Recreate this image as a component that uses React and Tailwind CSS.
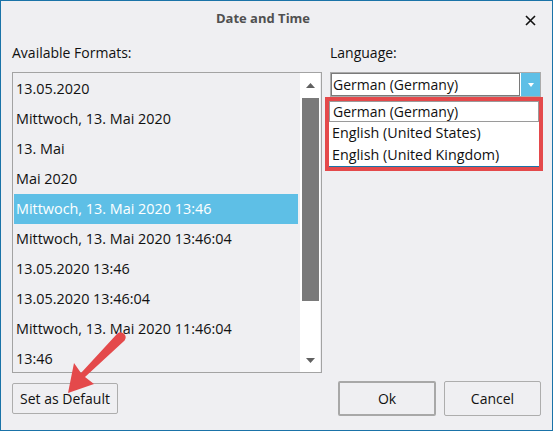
import React from "react";

const formats = [
  "13.05.2020",
  "Mittwoch, 13. Mai 2020",
  "13. Mai",
  "Mai 2020",
  "Mittwoch, 13. Mai 2020 13:46",
  "Mittwoch, 13. Mai 2020 13:46:04",
  "13.05.2020 13:46",
  "13.05.2020 13:46:04",
  "Mittwoch, 13. Mai 2020 11:46:04",
  "13:46",
];

const languages = ["German (Germany)", "English (United States)", "English (United Kingdom)"];

function Triangle({ up, className }) {
  return (
    <svg width="9" height="5" viewBox="0 0 9 5" className={className}>
      <polygon points={up ? "0,5 9,5 4.5,0" : "0,0 9,0 4.5,5"} fill="currentColor" />
    </svg>
  );
}

function FormatList() {
  return (
    <div className="h-[301px] border border-[#a3a3a3] flex overflow-hidden">
      <div className="flex-1 pl-[1px] pr-[2px] py-[1px] overflow-hidden text-[14.4px]">
        {formats.map((f, i) => (
          <div
            key={i}
            className={`h-[30px] flex items-center pl-[2px] whitespace-nowrap ${
              i === 4 ? "bg-[#5ebfe6] text-white" : "text-[#111]"
            }`}
          >
            {f}
          </div>
        ))}
      </div>
      <div className="w-[20px] mr-[1px] bg-white flex flex-col items-center">
        <div className="h-[25px] flex items-center justify-center text-[#606060]">
          <Triangle up />
        </div>
        <div className="w-[17px] h-[203px] bg-[#7a7a7a]" />
        <div className="flex-1" />
        <div className="h-[24px] flex items-center justify-center text-[#606060]">
          <Triangle />
        </div>
      </div>
    </div>
  );
}

function LanguageCombo() {
  return (
    <div className="relative mt-[1px]">
      <div className="h-[25px] border border-[#ababab] bg-white flex">
        <div className="flex-1 border border-[#7a7a7a] flex items-center pl-[1px] text-[#111]">
          German (Germany)
        </div>
        <div className="w-[19px] ml-[1px] bg-[#5ebfe6] flex items-center justify-center text-white">
          <svg width="6" height="4" viewBox="0 0 6 4">
            <polygon points="0,0 6,0 3,4" fill="currentColor" />
          </svg>
        </div>
      </div>
      {/* dropdown with red annotation */}
      <div className="absolute left-[-5px] top-[25px] w-[218px] h-[74px] border-4 border-[#e4494b] bg-white">
        <div className="border-b border-[#1a73a8]">
          {languages.map((l, i) => (
            <div
              key={l}
              className={`flex items-center pl-[3px] whitespace-nowrap text-[#111] ${
                i === 0 ? "h-[21px] border border-[#9a9a9a]" : "h-[22px] text-[14.3px]"
              }`}
            >
              {l}
            </div>
          ))}
        </div>
      </div>
    </div>
  );
}

export default function App() {
  return (
    <div className="w-[553px] h-[431px] border border-[#1a73a8] bg-[#efeff2] relative overflow-hidden font-['Open_Sans',sans-serif] text-[14px] text-[#111]">
      <div className="h-[36px] flex items-center">
        <div className="flex-1 text-center font-bold text-[13px] text-[#505050] pb-[1px]">Date and Time</div>
        <div className="w-[27px] pt-[2px]">
          <svg width="11" height="11" viewBox="0 0 11 11">
            <path d="M1 1 L10 10 M10 1 L1 10" stroke="#111" strokeWidth="1.6" />
          </svg>
        </div>
      </div>
      <div className="px-[11px]">
        <div className="flex">
          <div className="w-[310px]">
            <div className="h-[20px] mt-[6px] mb-[9px] leading-[20px]">Available Formats:</div>
            <FormatList />
          </div>
          <div className="ml-[8px] w-[211px]">
            <div className="h-[20px] mt-[6px] mb-[9px] leading-[20px]">Language:</div>
            <LanguageCombo />
          </div>
        </div>
        <div className="mt-[8px] h-[35px] flex items-center justify-between">
          <button className="h-[31px] w-[106px] border border-[#adadad] rounded-[2px] bg-[#efeff2] text-[#111]">
            Set as Default
          </button>
          <div className="flex gap-[8px]">
            <button className="h-[35px] w-[98px] border-2 border-[#a8a8a8] rounded-[2px] bg-[#efeff2] text-[#111]">
              Ok
            </button>
            <button className="h-[35px] w-[97px] border border-[#adadad] rounded-[2px] bg-[#efeff2] text-[#111]">
              Cancel
            </button>
          </div>
        </div>
      </div>
      {/* red annotation arrow */}
      <svg className="absolute left-0 top-0 pointer-events-none" width="553" height="431">
        <path
          d="M73 362 L80 372 L116.4 332.6 A5 5 0 0 1 123.6 339.4 L84 376 L93 383 L67 392 Z"
          fill="#e4494b"
        />
      </svg>
    </div>
  );
}
